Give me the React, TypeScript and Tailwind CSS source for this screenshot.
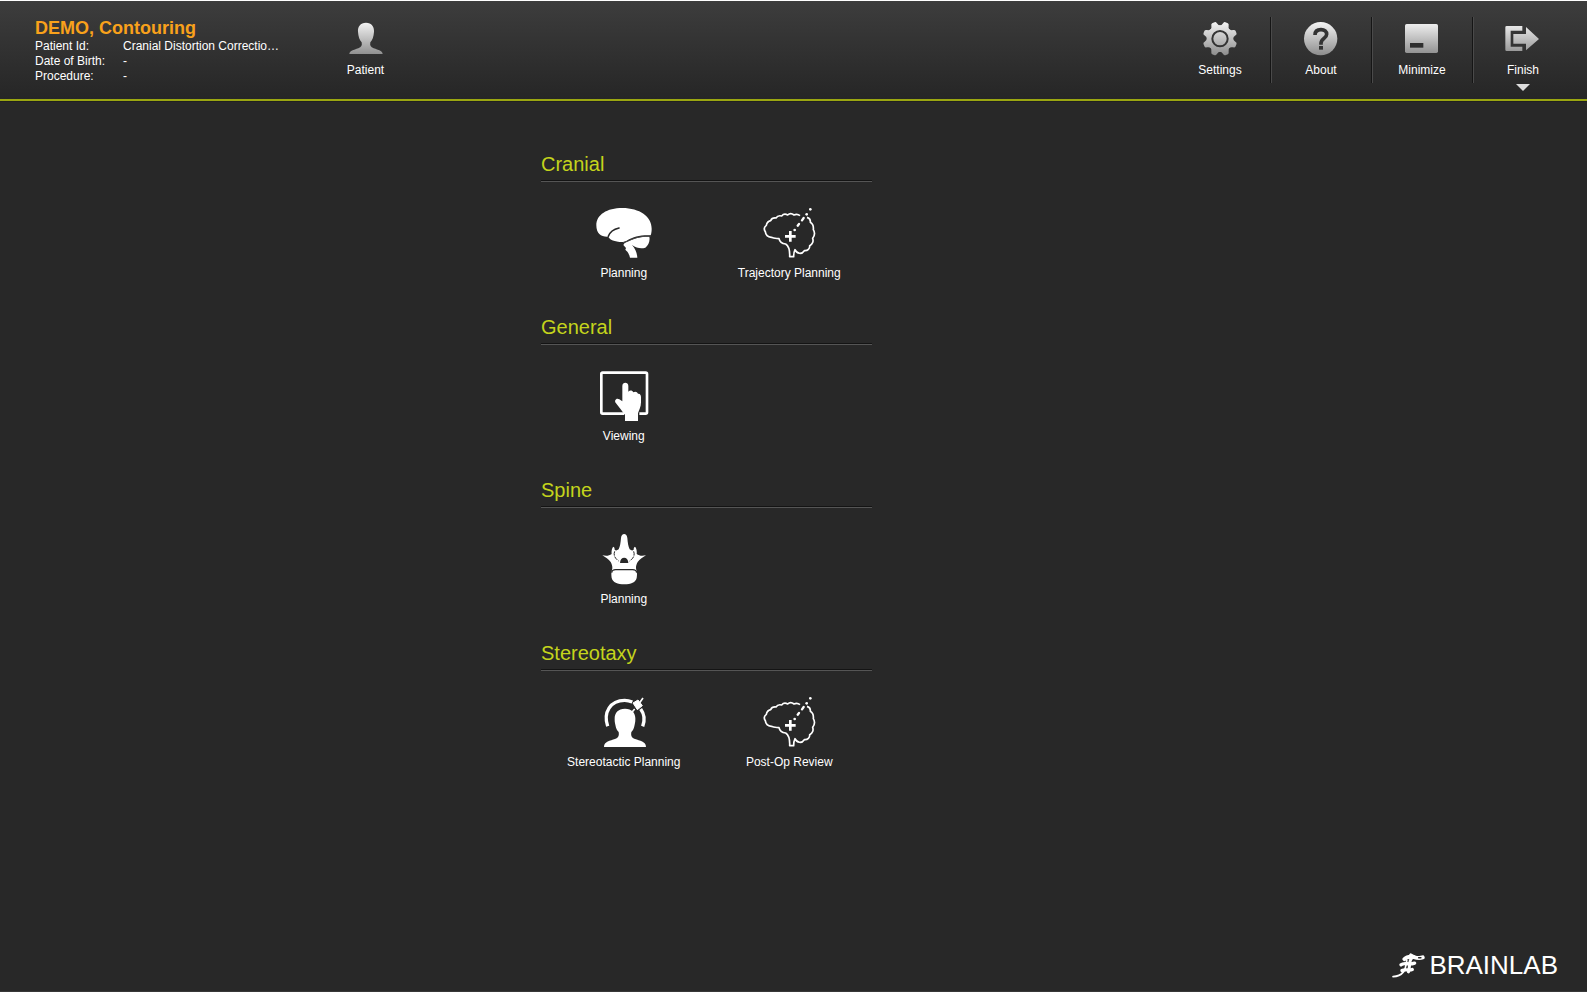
import type { ReactNode } from 'react';

const patientInfo = [
  { label: 'Patient Id:', value: 'Cranial Distortion Correctio…' },
  { label: 'Date of Birth:', value: '-' },
  { label: 'Procedure:', value: '-' }
];

function Silver({ id }: { id: string }) {
  return (
    <defs>
      <linearGradient id={id} x1="0" y1="66" x2="0" y2="166" gradientUnits="userSpaceOnUse">
        <stop offset="0" stopColor="#f4f4f4" />
        <stop offset="1" stopColor="#8c8c8c" />
      </linearGradient>
    </defs>
  );
}

function PatientIcon() {
  return (
    <svg viewBox="1044 60 108 108" className="size-9 shrink-0" aria-hidden="true">
      <Silver id="silver-patient" />
      <path
        fill="url(#silver-patient)"
        d="M1098 68c-17 0-25 12-24 27 1 16 5 25 11 32 2 10-1 15-10 18-14 5-27 8-27 17h100c0-9-13-12-27-17-9-3-12-8-10-18 6-7 10-16 11-32 1-15-7-27-24-27z"
      />
    </svg>
  );
}

function SettingsIcon() {
  const teeth = [22.5, 67.5, 112.5, 157.5, 202.5, 247.5, 292.5, 337.5];
  return (
    <svg viewBox="69 60 108 108" className="size-9 shrink-0" aria-hidden="true">
      <Silver id="silver-settings" />
      <mask id="gear-mask" maskUnits="userSpaceOnUse" x="69" y="60" width="108" height="108">
        <circle cx="123" cy="116" r="40" fill="#fff" />
        {teeth.map((angle) => (
          <path
            key={angle}
            d="M106 82q7-5 8-12 1-6 5-6h8q4 0 5 6 1 7 8 12z"
            fill="#fff"
            transform={`rotate(${angle} 123 116)`}
          />
        ))}
        <circle cx="123" cy="116" r="23" fill="none" stroke="#000" strokeWidth="6" />
      </mask>
      <rect x="69" y="60" width="108" height="108" fill="url(#silver-settings)" mask="url(#gear-mask)" />
    </svg>
  );
}

function AboutIcon() {
  return (
    <svg viewBox="372 60 108 108" className="size-9 shrink-0" aria-hidden="true">
      <Silver id="silver-about" />
      <circle cx="425" cy="116" r="50" fill="url(#silver-about)" />
      <path d="M408 105c0-11 7-16 18-16s17 6 17 14c0 12-17 13-17 27v4" fill="none" stroke="#333" strokeWidth="11" />
      <rect x="420" y="138" width="12" height="11" fill="#333" />
    </svg>
  );
}

function MinimizeIcon() {
  return (
    <svg viewBox="675 60 108 108" className="size-9 shrink-0" aria-hidden="true">
      <Silver id="silver-minimize" />
      <rect x="678" y="72" width="99" height="87" rx="5" fill="url(#silver-minimize)" />
      <rect x="693" y="129" width="40" height="14" fill="#2f2f2f" />
    </svg>
  );
}

function FinishIcon() {
  return (
    <svg viewBox="978 60 108 108" className="size-9 shrink-0" aria-hidden="true">
      <Silver id="silver-finish" />
      <g fill="url(#silver-finish)">
        <path d="M983 78h47v14h-35v48h35v13h-47q-4 0-4-4V82q0-4 4-4z" />
        <path d="M1003 102h38V81l39 36-39 34v-20h-38z" />
      </g>
    </svg>
  );
}

function BrainIcon() {
  return (
    <svg viewBox="42 36 180 156" className="h-[52px] w-[60px]" aria-hidden="true">
      <path
        fill="#fff"
        d="M84 125c-20 1-35-8-35-34 0-32 32-52 78-52 52 0 88 26 88 62 0 8-1 14-3 20-32-1-50 3-72 16-7 4-16 5-26 3-14-2-24-5-28-13z"
      />
      <path fill="#fff" d="M134 144c22-12 40-20 74-19 3 14-3 26-12 33-14 4-26 1-40-8 10 12 15 23 16 38h-22c-4-16-10-20-14-24l2-5-8-9z" />
      <path d="M85 124c5-14 14-21 32-25" fill="none" stroke="#282828" strokeWidth="5" strokeLinecap="round" />
      <path d="M129 143c25-6 35-20 84-20" fill="none" stroke="#444" strokeWidth="3" />
    </svg>
  );
}

function TrajectoryIcon() {
  return (
    <svg viewBox="27 36 180 156" className="h-[52px] w-[60px]" aria-hidden="true">
      <path
        fill="none"
        stroke="#fff"
        strokeWidth="5"
        strokeLinejoin="round"
        d="M150 62c-5-4-12-5-18-2-6-5-14-5-19 0-7-4-14-2-18 3-8-2-14 1-17 6-8-1-14 3-16 8-8 2-12 8-13 14-7 5-7 13-3 19 1 10 9 16 18 17 7 4 16 3 23 4 2 10 10 15 20 16 9 6 13 18 12 38h12c0-9 1-15 4-21 6 13 20 15 28 3 10 1 17-6 16-15 9-4 12-14 9-22 6-8 7-18 2-26 1-10-2-18-9-22 1-8-3-13-10-15"
      />
      <path d="M121 108v32M105 124h32" stroke="#fff" strokeWidth="8" />
      <path d="M143 92l4-5M156 76l5-7" stroke="#fff" strokeWidth="7" strokeLinecap="round" />
      <g fill="#fff">
        <circle cx="134" cy="105" r="4" />
        <circle cx="170" cy="58" r="4" />
        <circle cx="181" cy="43" r="4" />
      </g>
    </svg>
  );
}

function ViewingIcon() {
  return (
    <svg viewBox="27 30 180 156" className="h-[52px] w-[60px]" aria-hidden="true">
      <path d="M117 161H53q-4 0-4-4V42q0-4 4-4h129q4 0 4 4v115q0 4-4 4h-19" fill="none" stroke="#fff" strokeWidth="8" />
      <path
        fill="#fff"
        d="M112 78c0-13 18-13 18 0v17c5-5 12-4 15 2 6-4 12-1 14 4 7-1 9 5 9 11v15c0 14-6 22-9 33v23h-39v-18c-9-12-18-24-27-35-7-8 1-18 10-12l9 6z"
      />
    </svg>
  );
}

function SpineIcon() {
  return (
    <svg viewBox="27 27 180 156" className="h-[52px] w-[60px]" aria-hidden="true">
      <path
        fill="#fff"
        d="M108 42c1-16 18-16 19 0 1 14 3 26 7 34 5 4 9 4 12 1 0-5 1-8 4-9 5 5 6 14 5 22 8 6 17 6 28 4-9 7-19 11-25 20-5 9-6 17-4 24 3 8 2 16 1 24-3 13-17 19-37 19s-35-6-38-19c-1-8-2-16 1-24 2-7 1-15-4-24-6-9-16-13-25-20 11 2 20 2 28-4-1-8 0-17 5-22 3 1 4 4 4 9 3 3 7 3 12-1 4-8 6-20 7-34z"
      />
      <path d="M105 117c0-21 25-21 25 0z" fill="#282828" />
      <path d="M89 82c-4 12 0 20 12 29M146 82c4 12 0 20-12 29" fill="none" stroke="#282828" strokeWidth="3" strokeDasharray="13 3" />
      <path d="M80 146c1-7 5-9 12-9h51c7 0 11 2 12 9" fill="none" stroke="#282828" strokeWidth="4" />
    </svg>
  );
}

function StereotacticIcon() {
  return (
    <svg viewBox="102 21 180 156" className="h-[52px] w-[60px]" aria-hidden="true">
      <path
        fill="#fff"
        d="M195 59c-21 0-31 13-31 29 0 8 0 11 2 19 2 12 5 17 10 22 2 12-1 17-11 21-14 5-33 7-33 24h126c0-17-19-19-33-24-10-4-13-9-11-21 5-5 8-10 10-22 2-8 2-11 2-19 0-16-10-29-31-29z"
      />
      <path d="M143 112c-14-42 8-78 51-78 9 0 16 2 23 5M242 60c11 15 13 34 6 52" fill="none" stroke="#fff" strokeWidth="10" />
      <path d="M219 42l15-9 13 17-15 12z" fill="#fff" stroke="#fff" strokeWidth="3" strokeLinejoin="round" />
      <path d="M239 41l10-14M224 60l-10 12" stroke="#fff" strokeWidth="5" />
    </svg>
  );
}

function BrainlabMark() {
  return (
    <svg viewBox="32 34 98 74" className="h-[25px] w-[33px]" fill="none" stroke="#fff" strokeLinecap="round" aria-hidden="true">
      <path d="M69 52c8-8 18-8 28-6 9 3 18 4 26 1" strokeWidth="12" />
      <path d="M88 40l8 5M59 69c10-9 21 2 40-5M62 86c10-6 20 2 30-3" strokeWidth="10" />
      <path d="M90 50c-8 8-4 22-9 40" strokeWidth="9" />
      <path d="M76 56c-3 13-2 24-10 34-8 10-16 14-31 14" strokeWidth="5" />
      <path d="M111 48h7" stroke="#282828" strokeWidth="4" />
    </svg>
  );
}

const tools = [
  { name: 'Settings', icon: <SettingsIcon /> },
  { name: 'About', icon: <AboutIcon /> },
  { name: 'Minimize', icon: <MinimizeIcon /> },
  { name: 'Finish', icon: <FinishIcon />, menu: true }
];

const sections: { title: string; apps: { name: string; icon: ReactNode }[] }[] = [
  {
    title: 'Cranial',
    apps: [
      { name: 'Planning', icon: <BrainIcon /> },
      { name: 'Trajectory Planning', icon: <TrajectoryIcon /> }
    ]
  },
  { title: 'General', apps: [{ name: 'Viewing', icon: <ViewingIcon /> }] },
  { title: 'Spine', apps: [{ name: 'Planning', icon: <SpineIcon /> }] },
  {
    title: 'Stereotaxy',
    apps: [
      { name: 'Stereotactic Planning', icon: <StereotacticIcon /> },
      { name: 'Post-Op Review', icon: <TrajectoryIcon /> }
    ]
  }
];

export default function App() {
  return (
    <div className="flex min-h-screen flex-col border-b border-[#383838] bg-[#282828] font-['Liberation_Sans',Arial,sans-serif] text-xs leading-4 text-white">
      <header className="flex items-start border-t border-white bg-linear-to-b from-[#3d3d3d] to-[#262626] pr-3.5 pl-[35px]">
        <div className="w-[280px] pt-4">
          <h1 className="text-lg leading-[22px] font-bold text-[#f9a11b]">DEMO, Contouring</h1>
          <dl>
            {patientInfo.map((row) => (
              <div key={row.label} className="flex leading-[15px]">
                <dt className="w-22">{row.label}</dt>
                <dd>{row.value}</dd>
              </div>
            ))}
          </dl>
        </div>
        <button type="button" className="flex w-[101px] flex-col items-center gap-1.5 pt-[19px]">
          <PatientIcon />
          Patient
        </button>
        <nav className="ml-auto flex h-[98px] pt-4">
          {tools.map((tool) => (
            <div
              key={tool.name}
              className="flex h-[66px] border-l border-[#151515] shadow-[inset_1px_0_0_#4a4a4a] first:border-transparent first:shadow-none"
            >
              <button type="button" className="flex w-[100px] flex-col items-center gap-1.5 pt-[3px]">
                {tool.icon}
                {tool.name}
                {tool.menu && (
                  <svg viewBox="0 0 14 8" className="h-2 w-3.5 shrink-0" aria-hidden="true">
                    <path d="M0 0h14L7 7z" fill="#ddd" />
                  </svg>
                )}
              </button>
            </div>
          ))}
        </nav>
      </header>
      <div className="border-t-2 border-b border-t-[#9aa611] border-b-[#202020]" />

      <main className="flex flex-1 pt-[50px]">
        <div className="grow-[541] basis-0" />
        <div className="flex w-[331px] flex-col gap-[34px]">
          {sections.map((section) => (
            <section key={section.title}>
              <h2 className="border-b border-[#141414] pb-1 text-xl leading-6 text-[#c4d41c]">{section.title}</h2>
              <div className="grid grid-cols-2 border-t border-[#555] pt-[25px]">
                {section.apps.map((app) => (
                  <button key={app.name} type="button" className="flex flex-col items-center gap-1.5 whitespace-nowrap">
                    {app.icon}
                    {app.name}
                  </button>
                ))}
              </div>
            </section>
          ))}
        </div>
        <div className="grow-[715] basis-0" />
      </main>

      <footer className="flex items-center justify-end gap-1 pr-[29px] pb-3">
        <BrainlabMark />
        <span className="text-[26px] leading-7">BRAINLAB</span>
      </footer>
    </div>
  );
}
